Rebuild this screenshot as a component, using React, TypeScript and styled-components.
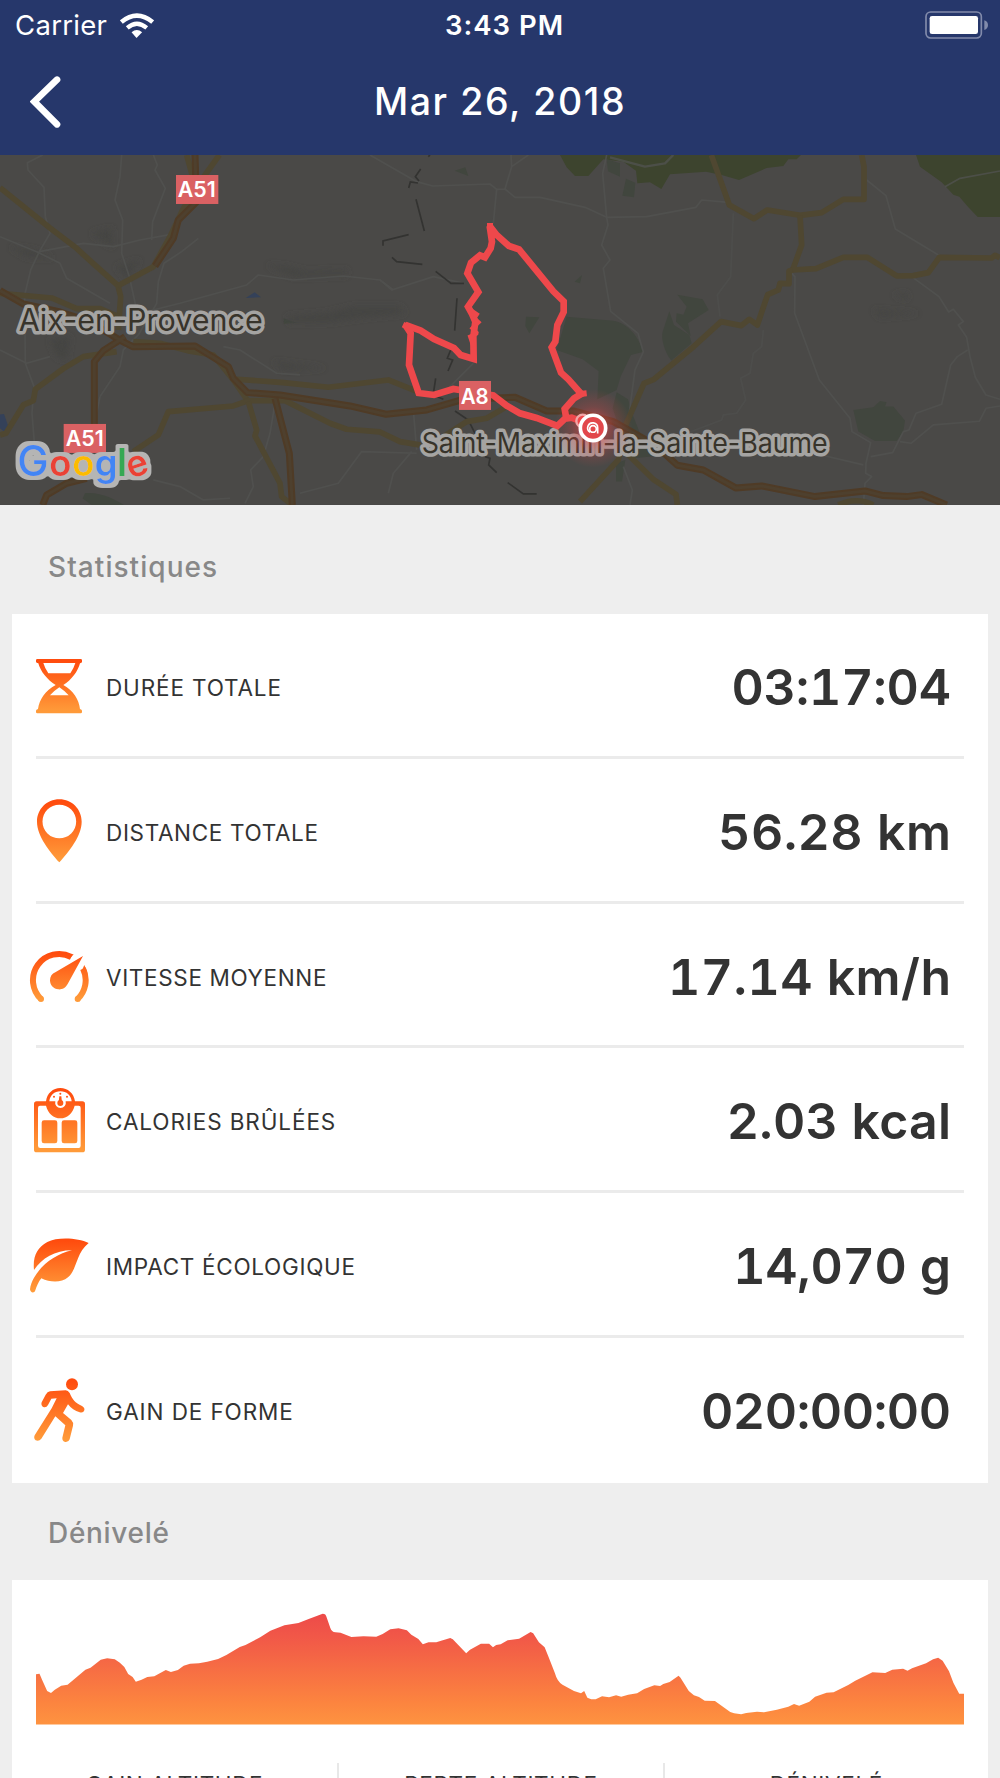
import React from "react";
import styled, { createGlobalStyle } from "styled-components";

const GlobalStyle = createGlobalStyle`
  html, body { margin: 0; padding: 0; background: #eeeeee; }
  *, *::before, *::after { box-sizing: border-box; }
`;

const Screen = styled.main`
  width: 1000px;
  height: 1778px;
  overflow: hidden;
  display: flex;
  flex-direction: column;
  background: #eeeeee;
  color: #333333;
  font-family: Inter, "Liberation Sans", sans-serif;
`;

const Header = styled.header`
  flex: none;
  height: 155px;
  background: #26376b;
  color: #ffffff;
`;

const StatusBar = styled.div`
  display: grid;
  grid-template-columns: 1fr auto 1fr;
  align-items: center;
  height: 50px;
  padding: 0 12px 0 15px;
  font-size: 27.5px;
  line-height: 34px;
`;

const Carrier = styled.div`
  display: flex;
  align-items: center;
  gap: 13px;
  letter-spacing: 0.3px;
`;

const Clock = styled.div`
  font-weight: 600;
  letter-spacing: 1px;
  padding-left: 6px;
`;

const BatterySlot = styled.div`
  display: flex;
  justify-content: flex-end;
`;

const NavBar = styled.div`
  display: grid;
  grid-template-columns: 90px 1fr 90px;
  align-items: center;
  height: 103px;
`;

const BackButton = styled.button`
  display: flex;
  width: 90px;
  padding: 0 0 0 30px;
  border: 0;
  background: none;
  color: inherit;
`;

const Title = styled.h1`
  margin: 0;
  text-align: center;
  font-size: 37.5px;
  line-height: 48px;
  font-weight: 450;
  letter-spacing: 1.6px;
`;

const MapFrame = styled.div`
  flex: none;
  height: 349.6px;
  background: #4a4947;
  svg { display: block; }
`;

const SectionTitle = styled.h2<{ $height: number; $offset: number; $spacing: number }>`
  flex: none;
  margin: 0;
  height: ${(p) => p.$height}px;
  padding: ${(p) => p.$offset}px 0 0 48px;
  display: flex;
  align-items: center;
  font-size: 28px;
  line-height: 36px;
  font-weight: 500;
  letter-spacing: ${(p) => p.$spacing}px;
  color: #888888;
`;

const Card = styled.section`
  flex: none;
  margin: 0 12px;
  padding: 0 24px;
  background: #ffffff;
`;

const Row = styled.div`
  display: flex;
  align-items: center;
  height: 144.9px;
  padding: 4px 13px 0 0;
  border-bottom: 3px solid #ebebeb;
  &:last-child { border-bottom-color: transparent; }
`;

const IconSlot = styled.span`
  flex: none;
  display: flex;
  width: 60px;
  height: 66px;
  margin: 0 17px 2px -7px;
`;

const Label = styled.span<{ $spacing: number }>`
  font-size: 22.5px;
  line-height: 30px;
  padding-top: 2px;
  white-space: nowrap;
  letter-spacing: ${(p) => p.$spacing}px;
`;

const Value = styled.strong<{ $spacing: number }>`
  margin-left: auto;
  margin-right: ${(p) => -p.$spacing}px;
  font-size: 50px;
  line-height: 60px;
  font-weight: 600;
  font-variant-numeric: tabular-nums;
  white-space: nowrap;
  letter-spacing: ${(p) => p.$spacing}px;
`;

const ChartBox = styled.div`
  padding-top: 33.6px;
  height: 183.6px;
  svg { display: block; }
`;

const Totals = styled.div`
  display: grid;
  grid-template-columns: repeat(3, 1fr);
  height: 120px;
  margin: 0 -24px;
`;

const Total = styled.div`
  padding-top: 7px;
  text-align: center;
  & + & { border-left: 2px solid #e8e8e8; }
`;

function WifiIcon() {
  return (
    <svg width="34" height="25" viewBox="362 35 103 75">
      <path d="M412 110 L397 93 Q413 80 429 93 Z" fill="#fff" />
      <path d="M384 80 Q413 55 443 80" fill="none" stroke="#fff" strokeWidth="13" />
      <path d="M366 62 Q413 23 461 62" fill="none" stroke="#fff" strokeWidth="14" />
    </svg>
  );
}

function BatteryIcon() {
  return (
    <svg width="63" height="28" viewBox="75 30 189 84">
      <rect x="78" y="33" width="166" height="78" rx="14" fill="none" stroke="#828bab" strokeWidth="5" />
      <rect x="89" y="45" width="145" height="54" rx="7" fill="#fff" />
      <path d="M253 58 Q264 62 264 72 Q264 83 253 87 Z" fill="#828bab" />
    </svg>
  );
}

const ORANGE_TOP = "#ff4c0e";
const ORANGE_BOTTOM = "#ff9a39";

type GlyphProps = { id: string; top: number; from: number; to: number; children: React.ReactNode };

function Glyph({ id, top, from, to, children }: GlyphProps) {
  return (
    <svg width="60" height="66" viewBox={`87 ${top} 180 198`}>
      <defs>
        <linearGradient id={id} gradientUnits="userSpaceOnUse" x1="0" x2="0" y1={from} y2={to}>
          <stop offset="0.05" stopColor={ORANGE_TOP} />
          <stop offset="0.95" stopColor={ORANGE_BOTTOM} />
        </linearGradient>
      </defs>
      <g fill={`url(#${id})`}>{children}</g>
    </svg>
  );
}

const HourglassIcon = () => (
  <Glyph id="hourglass" top={369} from={387} to={550}>
    <path
      fillRule="evenodd"
      d="M112 387 H242 Q246 387 246 391 V395 Q246 399 240 400 C234 424 214 451 190 465 C220 481 237 509 240 537 Q246 539 246 542 V546 Q246 550 242 550 H112 Q108 550 108 546 V542 Q108 539 114 537 C118 509 136 481 167 465 C143 451 121 424 115 400 Q108 399 108 395 V391 Q108 387 112 387 Z M130 399 Q135 416 145 430 H211 Q221 416 226 399 Z M178 472 Q160 484 150 496 H206 Q196 484 178 472 Z"
    />
  </Glyph>
);

const PinIcon = () => (
  <Glyph id="pin" top={804} from={808} to={997}>
    <path
      fillRule="evenodd"
      d="M178 808 C216 808 245 838 245 875 C245 918 206 966 178 997 C150 966 111 918 111 875 C111 838 140 808 178 808 Z M178 824 A50.500 50.500 0 1 0 178 925 A50.500 50.500 0 1 0 178 824 Z"
    />
  </Glyph>
);

const GaugeIcon = () => (
  <Glyph id="gauge" top={99} from={122} to={276}>
    <g fill="none" stroke="url(#gauge)" strokeWidth="18">
      <path d="M124 268 A78.500 78.500 0 0 1 214 141" />
      <path d="M249 176 A78.500 78.500 0 0 1 232 268" />
    </g>
    <circle cx="123" cy="267" r="9" />
    <circle cx="233" cy="267" r="9" />
    <path d="M208 133 L221 133 L208 147 Z" />
    <path d="M253 165 L261 184 L244 185 Z" />
    <path d="M249 138 L203 222 C196 235 185 239 175 238 C161 237 150 226 150 211 C150 200 156 191 166 187 Z" />
  </Glyph>
);

const ScaleIcon = () => (
  <Glyph id="scale" top={533} from={536} to={729}>
    <path
      fillRule="evenodd"
      d="M110 576 H138 C141 552 159 536 181 536 C203 536 222 552 225 576 H247 Q255 576 255 584 V721 Q255 729 247 729 H110 Q102 729 102 721 V584 Q102 576 110 576 Z M120 589 Q114 589 114 596 V709 Q114 716 121 716 H236 Q242 716 242 709 V596 Q242 589 236 589 H224 C218 613 201 627 181 627 C161 627 144 613 138 589 Z M148 576 H166 A16 16 0 1 0 197 576 H215 C213 558 200 546 181 546 C163 546 150 558 148 576 Z"
    />
    <rect x="125" y="633" width="47" height="69" rx="7" />
    <rect x="185" y="633" width="47" height="69" rx="7" />
    <circle cx="181" cy="581" r="9" />
    <path d="M178 561 H184 L186 579 H176 Z" />
    <circle cx="181" cy="553" r="3" />
    <circle cx="162" cy="562" r="3" />
    <circle cx="201" cy="562" r="3" />
  </Glyph>
);

const LeafIcon = () => (
  <Glyph id="leaf" top={98} from={117} to={280}>
    <path d="M266 131 C234 115 172 112 142 128 C111 145 98 171 102 212 C126 177 164 153 216 153 C171 164 129 190 102 235 C96 246 91 259 90 270 C91 281 103 283 106 273 C110 261 115 248 124 237 C151 250 184 251 204 234 C233 208 226 164 266 131 Z" />
  </Glyph>
);

const RunnerIcon = () => (
  <Glyph id="runner" top={533} from={536} to={729}>
    <circle cx="216" cy="555" r="18" />
    <path d="M150 576 L197 573 Q204 573 209 581 C217 600 225 611 246 620 Q255 625 253 633 Q250 642 239 639 C225 635 213 627 204 615 L189 641 L214 662 Q221 669 219 679 L209 720 Q206 729 196 728 Q186 725 187 715 L196 678 L166 651 L124 718 Q117 727 107 723 Q100 717 104 708 L155 627 L170 597 L154 598 L144 617 Q139 626 130 623 Q122 619 125 609 L137 586 Q142 577 150 576 Z" />
  </Glyph>
);

function RideMap() {
  const halo = { paintOrder: "stroke" as const, strokeLinejoin: "round" as const };
  return (
    <svg width="1000" height="349.6" viewBox="0 15 3000 1049" preserveAspectRatio="none">
      <defs>
        <radialGradient id="glow">
          <stop offset="0.2" stopColor="#ef4549" stopOpacity="0.6" />
          <stop offset="0.55" stopColor="#ef4549" stopOpacity="0.24" />
          <stop offset="1" stopColor="#ef4549" stopOpacity="0" />
        </radialGradient>
        <filter id="soft" x="-20%" y="-50%" width="140%" height="200%">
          <feGaussianBlur stdDeviation="9" />
        </filter>
        <filter id="outline" x="-10%" y="-20%" width="120%" height="140%">
          <feMorphology in="SourceAlpha" operator="dilate" radius="13" result="grown" />
          <feGaussianBlur in="grown" stdDeviation="3" result="round" />
          <feComponentTransfer in="round" result="edge">
            <feFuncA type="linear" slope="3" intercept="-1" />
          </feComponentTransfer>
          <feFlood floodColor="#b5b5b4" />
          <feComposite in2="edge" operator="in" result="plate" />
          <feMerge>
            <feMergeNode in="plate" />
            <feMergeNode in="SourceGraphic" />
          </feMerge>
        </filter>
      </defs>
      <rect y="15" width="3000" height="1050" fill="#4a4947" />

      {/* parks and relief */}
      <g fill="#3d442e">
        <path d="M1680 15 H2403 L2390 28 L2365 28 L2350 48 L2300 54 L2217 90 L2165 75 L2118 65 L2010 73 L1984 117 L1950 97 L1912 100 L1908 62 L1870 35 L1810 28 L1765 78 L1725 78 L1700 52 Z" />
        <path d="M2748 15 H3000 V201 H2933 L2905 172 L2878 140 L2860 134 L2825 97 L2760 50 Z" />
      </g>
      <g fill="#41463e">
        <path d="M1700 500 L1840 512 C1880 518 1920 560 1928 606 L1893 615 L1862 680 L1850 720 L1792 748 L1796 664 L1748 628 L1670 600 Z" />
        <path d="M1578 500 L1618 502 L1588 550 L1576 528 Z" />
        <path d="M1364 62 L1396 52 L1405 78 Z" />
        <path d="M1820 28 L1860 40 L1860 80 L1824 64 Z" />
        <path d="M1878 86 L1906 98 L1902 142 L1867 137 Z" />
        <path d="M2008 484 L2022 525 L2068 555 L2075 580 L2014 632 C1990 600 1983 560 1988 545 Z" />
        <path d="M2032 434 L2108 448 L2126 480 L2064 520 L2072 558 L2028 515 L2030 490 L2050 494 L2060 470 Z" />
        <path d="M2560 780 L2620 772 L2640 753 L2660 757 L2655 770 L2680 770 L2715 812 L2710 845 L2690 873 L2625 873 L2575 845 Z" />
        <path d="M1850 727 L1884 748 L1900 800 L1920 850 L1970 918 L1900 925 L1860 840 L1838 775 Z" />
        <path d="M1848 940 L1876 930 L1866 995 L1848 995 Z" />
        <path d="M255 1030 C300 1025 345 1048 372 1065 H275 L248 1046 Z" />
        <path d="M850 505 L890 518 L852 521 Z" />
        <path d="M1724 395 L1746 375 L1740 400 Z" />
      </g>
      <g fill="#454543" filter="url(#soft)">
        <path d="M860 500 L980 490 L1060 470 L1200 470 L1215 490 L1100 500 L990 515 L870 518 Z" />
        <path d="M800 345 L860 350 L920 365 L1040 360 L1040 376 L880 380 Z" />
        <path d="M820 635 L900 645 L980 655 L850 660 Z" />
        <path d="M275 250 L335 235 L338 292 Z" />
        <path d="M30 290 L100 300 L160 325 L80 320 Z" />
        <path d="M150 570 L210 560 L200 630 L170 620 Z" />
        <path d="M2620 480 L2760 490 L2640 500 Z" />
        <path d="M2680 435 L2720 430 L2722 448 Z" />
        <path d="M350 350 L420 330 L380 385 Z" />
      </g>
      <g fill="#344159">
        <path d="M737 444 L764 427 L783 442 Z" />
        <path d="M0 794 L12 792 L25 830 L12 845 L0 835 Z" />
      </g>

      {/* minor roads */}
      <g fill="none" stroke="#525351" strokeWidth="5" strokeLinejoin="round" opacity="0.75">
        <path d="M128 15 L82 38 L84 60 L132 112 L136 200 L150 250 L118 305 L92 360 L74 435 L76 640 L102 710 L96 790 L104 890" />
        <path d="M365 15 L360 80 L345 150 L368 210 L365 310 L388 380 L410 480" />
        <path d="M460 15 L472 45 L465 60 L496 115 L458 215 L455 270 M595 265 L545 305 L492 340 L475 395 L470 460 L415 555 L370 600 L360 650 L300 740" />
        <path d="M0 260 L110 305 L180 340 L200 385 L330 460 M118 305 L250 280 L340 290 L420 270 L530 250" />
        <path d="M400 495 L540 460 L740 405 L775 375 L880 390 L1030 378 L1140 390 L1175 420 L1300 380 L1392 400" />
        <path d="M1110 15 L1250 95 L1298 108 L1470 102 L1490 118" />
        <path d="M1533 15 L1535 50 L1515 117 L1490 118 L1480 220 M1535 50 L1585 15 M1515 117 L1545 142 L1620 142 L1755 172 L1820 202 L1940 200 L2088 172 L2105 150 L2185 157" />
        <path d="M1820 15 L1808 70 L1820 202 L1824 225 L1805 285 L1830 330 L1810 355 L1832 484 L1914 550 L1930 606 L1905 660 L1885 810" />
        <path d="M1830 22 L1935 50 L1995 40 L2020 15" strokeWidth="7" />
        <path d="M2600 90 L2658 137 L2686 237 L2820 318 M2735 380 L2817 440 L2846 486 L2860 478 L2890 515 L2875 525 L2900 562 L2910 620 L2926 682 L2958 735 L3000 748" />
        <path d="M2375 370 L2385 380 L2384 490 L2458 690 L2550 805 L2556 845 L2612 878 L2598 940 L2597 970 L2615 980 L2595 1000 L2590 1065" />
        <path d="M2612 920 L2678 908 L2710 845 L2727 840 L2748 790 L2825 763 L2852 645 L2872 620 L2903 600" />
        <path d="M2700 875 L2733 880 L2800 825 L2938 814 L2958 775 L3000 768" />
        <path d="M2200 190 L2192 380 L2152 435 L2160 500 M2290 540 L2285 590 L2260 610 L2250 670 L2222 685 L2237 750 L2210 790 L2170 795 L2165 810 L2060 850" opacity="0.6" />
        <path d="M2835 110 L2880 85 L3000 63" />
        <path d="M2400 900 L2590 945 M1870 950 L1897 1020 L1890 1065 M1140 390 L1180 420" />
        <path d="M825 760 L810 850 L790 920 L752 960 L760 1010 L735 1060 M460 990 L540 1010 L610 1050 L690 1045 M1235 905 L1180 970 L1165 1030" />
        <path d="M0 600 L80 640 L150 620 M670 590 L720 600 L830 670 L900 675 M300 740 L280 840" />
        <path d="M1250 910 L1085 905 L1015 1000 L900 1030 M1240 780 L1250 900 M1420 640 L1340 720" />
      </g>

      {/* borders */}
      <g fill="none" stroke="#333331" strokeWidth="5">
        <path d="M1290 15 L1285 20 M1262 57 L1246 80 L1257 93 M1254 99 L1231 96 L1226 114 M1248 148 L1273 243 M1226 254 L1149 273 V287 M1176 322 L1190 335 L1267 343 M1307 364 L1353 400 H1392 M1371 445 L1364 542 M1352 600 L1342 625 L1358 630 L1344 663 M1307 685 L1301 725 M1300 735 L1330 748 M1365 783 L1405 810 L1425 850 M1455 920 L1470 925 L1466 945 L1490 968 M1523 998 L1570 1032 H1610" />
      </g>

      {/* secondary roads */}
      <g fill="none" stroke="#4f4731" strokeWidth="17" strokeLinejoin="round">
        <path d="M0 113 L150 234 L230 295 L270 332 L354 407 L362 440 L355 540" />
        <path d="M354 407 L460 350 L510 260 L548 180 L590 110 L658 15 M560 15 L578 80" />
        <path d="M0 430 L155 444 L230 476 L300 476 L355 500" />
        <path d="M0 855 L18 850 L70 765 L100 752 L106 718 L190 656 L250 620 L350 605 M400 575 L480 580 L570 604 L640 615 L700 690 L745 755" />
        <path d="M400 905 L475 855 L505 785 L700 768 L745 752 L855 752 L990 820 L1040 838 L1140 846 L1200 875 L1290 890 L1330 860 L1400 815 L1460 805 L1520 770" />
        <path d="M710 688 L850 698 L985 712 L1165 690 L1260 728" />
        <path d="M745 755 L770 840 L765 858 L840 1000 L845 1040 L870 1060" />
        <path d="M2134 15 L2188 165 L2262 206 L2302 180 L2400 196 L2465 188 L2530 148 H2592 V50 L2585 15" />
        <path d="M2400 196 L2405 285 L2378 360 L2448 356 L2530 322 H2602 L2690 378 L2740 377 L2785 368 L2818 322 L2975 324 L2985 316 L3000 323" />
        <path d="M2378 360 L2367 363 V401 L2340 400 L2335 420 L2303 434 L2272 525 L2248 508 L2224 527 L2163 515 L2075 595 L1962 688 L1932 700 L1875 830 L1855 930 L1740 1055" />
        <path d="M1870 900 L1962 990 L2028 1033 L2032 1065" />
        <path d="M2515 1065 Q2570 1040 2620 1065" />
      </g>

      {/* motorways */}
      <g fill="none" strokeLinejoin="round">
        {[
          { width: 21, color: "#4f3b26" },
          { width: 9, color: "#4e402e" },
        ].map((line) => (
          <g key={line.width} stroke={line.color} strokeWidth={line.width}>
            <path d="M585 15 L587 75 M590 155 L535 210 L520 265 L465 348" />
            <path d="M0 422 L70 462 L180 486 L270 515 L355 568 L398 590 L585 588 L685 650 L700 685 L742 728 L840 735 L1050 768 L1158 793 L1280 780 L1390 748 L1545 742 L1640 783 H1720 L1840 815 L1965 885 L2032 946 L2110 960 L2207 1014 L2285 1008 L2445 1040 L2595 1023 L2650 1037 L2720 1040 L2765 1034 L2840 1065" />
            <path d="M375 560 L310 602 L283 635 V830 M260 985 L200 1000 L140 1035 L128 1065" />
            <path d="M825 745 L868 910 L877 1065" />
          </g>
        ))}
      </g>

      {/* town names */}
      <g fill="#38342b" stroke="#a5a4a2" strokeWidth="21" fontFamily="Inter, sans-serif" style={halo}>
        <text x="56" y="543" fontSize="93" textLength="732" lengthAdjust="spacingAndGlyphs">Aix-en-Provence</text>
        <text x="1265" y="910" fontSize="85" textLength="1218" lengthAdjust="spacingAndGlyphs">Saint-Maximin-la-Sainte-Baume</text>
      </g>

      <ellipse cx="1779" cy="835" rx="118" ry="118" fill="url(#glow)" />

      {/* recorded track */}
      <path
        d="M1780 833 L1745 815 L1715 803 L1695 806 L1672 828 L1610 804 L1560 790 L1520 767 L1480 736 L1360 717 L1302 735 L1256 729 L1227 645 L1232 550 L1216 525 L1262 542 L1302 567 L1362 594 L1382 615 L1421 627 L1420 560 L1426 515 L1416 492 L1404 470 L1435 426 L1402 370 L1413 338 L1440 316 L1455 322 L1472 295 L1476 275 L1469 228 L1490 255 L1527 288 L1557 298 L1660 424 L1691 454 V486 L1672 525 L1666 575 L1655 592 L1683 668 L1705 688 L1744 732 L1722 745 L1694 777 L1699 806"
        fill="none"
        stroke="#ee484b"
        strokeWidth="20"
        strokeLinejoin="miter"
        strokeMiterlimit="1.9"
      />
      <path d="M1420 590 L1410 560 L1432 550 L1417 535 L1436 517 L1423 505 L1431 493 L1412 480" fill="none" stroke="#ee484b" strokeWidth="12" strokeMiterlimit="1.5" />
      <path d="M1222 530 L1209 524 M1470 232 L1470 219 M1740 732 L1760 730" stroke="#ee484b" strokeWidth="18" />

      {/* road shields */}
      <g fill="#da6163">
        <rect x="528" y="75" width="127" height="87" />
        <rect x="191" y="822" width="127" height="87" />
        <rect x="1377" y="693" width="96" height="87" />
      </g>
      <g fill="#fff" fontFamily="Inter, sans-serif" fontWeight="600" fontSize="64" textAnchor="middle">
        <text x="590" y="142" textLength="114" lengthAdjust="spacingAndGlyphs">A51</text>
        <text x="254" y="889" textLength="114" lengthAdjust="spacingAndGlyphs">A51</text>
        <text x="1424" y="761" textLength="84" lengthAdjust="spacingAndGlyphs">A8</text>
      </g>

      {/* position marker */}
      <circle cx="1748" cy="813" r="19" fill="#ee484b" stroke="#f2a5a6" strokeWidth="7" />
      <circle cx="1779" cy="834" r="38" fill="#e2474b" stroke="#fff" strokeWidth="11" />
      <circle cx="1779" cy="837" r="10" fill="none" stroke="#fff" strokeWidth="5" />
      <path d="M1793 851 V834 A15 15 0 1 0 1771 847" fill="none" stroke="#fff" strokeWidth="5" />

      {/* map provider */}
      <g fontFamily="Inter, sans-serif" textAnchor="middle" filter="url(#outline)">
        <text x="99" y="978" fontSize="126" fontWeight="500" fill="#4285f4">G</text>
        <text x="181" y="978" fontSize="109" fontWeight="600" fill="#ea4335">o</text>
        <text x="250" y="978" fontSize="109" fontWeight="600" fill="#fbbc05">o</text>
        <text x="318" y="978" fontSize="109" fontWeight="600" fill="#4285f4">g</text>
        <text x="366" y="977" fontSize="115" fontWeight="600" fill="#34a853">l</text>
        <text x="412" y="978" fontSize="109" fontWeight="600" fill="#ea4335" transform="rotate(-18 412 948)">e</text>
      </g>
    </svg>
  );
}

function ElevationChart() {
  return (
    <svg width="928" height="111.500" viewBox="56.500 160 1455 334.500" preserveAspectRatio="none">
      <defs>
        <linearGradient id="elevation" x1="0" x2="0" y1="0" y2="1">
          <stop offset="0" stopColor="#ed4a49" />
          <stop offset="0.2" stopColor="#f15748" />
          <stop offset="0.8" stopColor="#fc843f" />
          <stop offset="1" stopColor="#fe9340" />
        </linearGradient>
      </defs>
      <path
        fill="url(#elevation)"
        d="M56 494.500 V344 L62 342 L66 360 L74 394 L80 400 L86 390 L96 378 L106 375 L120 353 L134 330 L142 324 L158 300 L168 296 L180 299 L188 309 L195 322 L201 343 L208 352 L213 366 L222 360 L231 352 L242 350 L260 331 L268 337 L279 331 L288 318 L298 312 L312 311 L325 306 L342 298 L355 286 L376 262 L385 256 L408 233 L424 213 L446 197 L468 190 L484 178 L506 162 Q511 162 512 172 L518 205 Q520 217 526 218 L534 219 L551 232 L570 230 L590 231 L600 223 L612 209 L625 206 L638 212 L645 225 L656 238 L663 254 L672 248 L684 248 L706 235 L710 239 L731 281 L737 270 L754 252 L767 252 L773 263 L778 256 L785 254 L796 242 L814 237 L832 217 L836 221 L845 248 L854 263 L860 291 L870 340 Q874 367 882 375 L900 394 L911 401 L916 394 L921 414 L927 419 L934 419 L944 410 L955 413 L966 407 L974 411 L985 405 L999 401 L1010 388 L1026 377 L1035 379 L1040 373 L1050 367 L1064 348 L1067 354 L1080 394 L1088 407 L1096 412 L1105 423 L1121 424 L1145 457 L1151 461 L1162 464 L1170 460 L1187 456 L1198 458 L1218 450 L1236 441 L1245 433 L1253 438 L1269 426 L1278 411 L1296 399 L1307 398 L1330 376 L1341 363 L1368 338 L1388 340 L1399 330 L1416 327 L1423 333 L1430 326 L1452 311 L1463 299 L1471 294 L1478 303 L1488 335 L1495 370 L1504 402 H1512 V494.500 Z"
      />
    </svg>
  );
}

const stats = [
  { icon: <HourglassIcon />, label: "DURÉE TOTALE", labelSpacing: 0.85, value: "03:17:04", spacing: -0.2 },
  { icon: <PinIcon />, label: "DISTANCE TOTALE", labelSpacing: 0.65, value: "56.28 km", spacing: 0.45 },
  { icon: <GaugeIcon />, label: "VITESSE MOYENNE", labelSpacing: 0.65, value: "17.14 km/h", spacing: 0.4 },
  { icon: <ScaleIcon />, label: "CALORIES BRÛLÉES", labelSpacing: 0.9, value: "2.03 kcal", spacing: 0.2 },
  { icon: <LeafIcon />, label: "IMPACT ÉCOLOGIQUE", labelSpacing: 0.7, value: "14,070 g", spacing: -0.3 },
  { icon: <RunnerIcon />, label: "GAIN DE FORME", labelSpacing: 0.9, value: "020:00:00", spacing: -0.4 },
];

const totals = ["GAIN ALTITUDE", "PERTE ALTITUDE", "DÉNIVELÉ"];

export default function App() {
  return (
    <>
      <GlobalStyle />
      <Screen>
        <Header>
          <StatusBar>
            <Carrier>
              Carrier
              <WifiIcon />
            </Carrier>
            <Clock>3:43 PM</Clock>
            <BatterySlot>
              <BatteryIcon />
            </BatterySlot>
          </StatusBar>
          <NavBar>
            <BackButton aria-label="Retour">
              <svg width="32" height="52" viewBox="91 228 96 156">
                <path d="M172 239 L104 305 L172 373" fill="none" stroke="#fff" strokeWidth="20" strokeLinecap="round" strokeLinejoin="miter" />
              </svg>
            </BackButton>
            <Title>Mar 26, 2018</Title>
          </NavBar>
        </Header>

        <MapFrame>
          <RideMap />
        </MapFrame>

        <SectionTitle $height={109.2} $offset={15} $spacing={1.05}>Statistiques</SectionTitle>
        <Card>
          {stats.map((s) => (
            <Row key={s.label}>
              <IconSlot>{s.icon}</IconSlot>
              <Label $spacing={s.labelSpacing}>{s.label}</Label>
              <Value $spacing={s.spacing}>{s.value}</Value>
            </Row>
          ))}
        </Card>

        <SectionTitle $height={96.4} $offset={4} $spacing={0.7}>Dénivelé</SectionTitle>
        <Card>
          <ChartBox>
            <ElevationChart />
          </ChartBox>
          <Totals>
            {totals.map((name) => (
              <Total key={name}>
                <Label $spacing={0.65}>{name}</Label>
              </Total>
            ))}
          </Totals>
        </Card>
      </Screen>
    </>
  );
}
